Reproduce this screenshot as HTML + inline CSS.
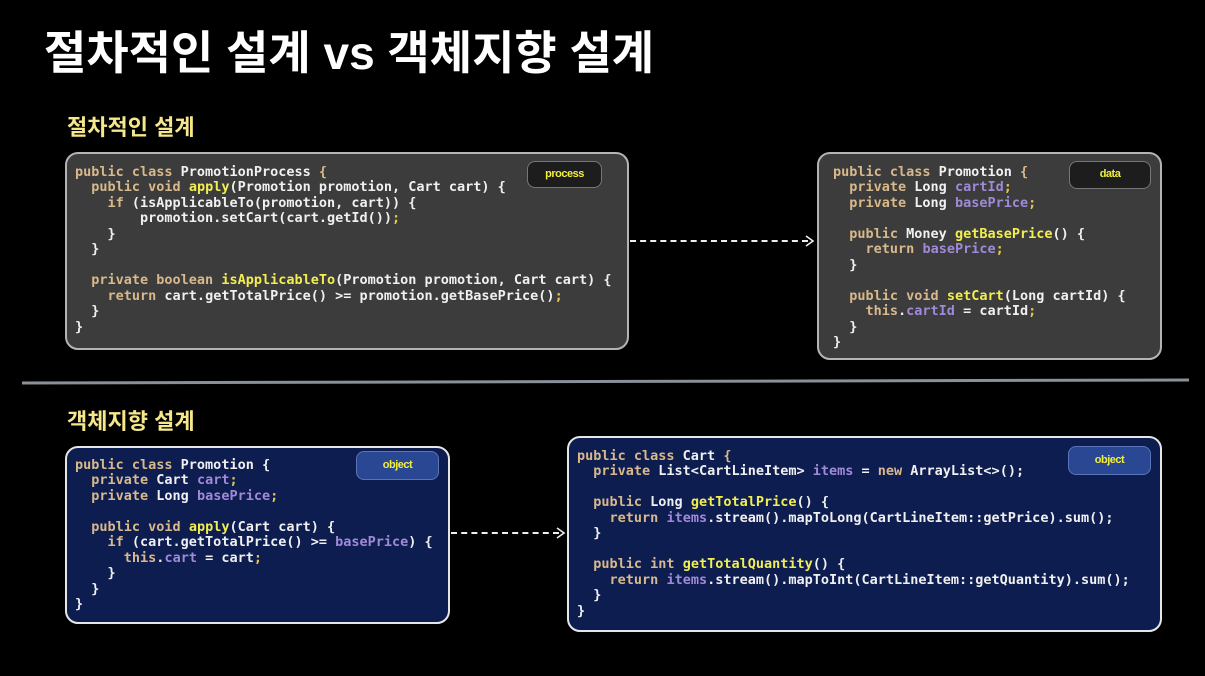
<!DOCTYPE html>
<html><head><meta charset="utf-8"><style>
body{margin:0;width:1205px;height:676px;background:#000;position:relative;overflow:hidden;font-family:"Liberation Sans","Noto Sans CJK KR",sans-serif}
.t{position:absolute;left:44px;top:17px;font-size:46px;font-weight:bold;color:#fff;letter-spacing:0px;white-space:nowrap}
.s{position:absolute;font-size:22px;font-weight:bold;color:#f5e78a;white-space:nowrap}
.box{position:absolute;box-sizing:border-box;border-radius:13px}
.g{background:#3c3c3c;border:2px solid #b4b4b4}
.n{background:#0e1d50;border:2px solid #e6e6e6}
pre{position:absolute;margin:0;font-family:"DejaVu Sans Mono",monospace;font-weight:bold;font-size:13.5px;line-height:15.45px;color:#f0f0f0}
.k{color:#d9b98c}.m{color:#f2ee52}.f{color:#a08ad8}.y{color:#e9c54c}
.b{position:absolute;box-sizing:border-box;border-radius:8px;font-size:11px;font-weight:bold;color:#f2ee40;text-align:center;letter-spacing:-0.5px}
.bg{background:#1d1d1d;border:1.5px solid #777}
.bn{background:#2a4794;border:1.5px solid #5a74b8}
.dash{position:absolute;height:0;border-top:2px dashed #eee}
</style></head><body>
<div class="t">절차적인 설계 vs 객체지향 설계</div>
<div class="s" style="left:67px;top:110px">절차적인 설계</div>
<div class="s" style="left:67px;top:404px">객체지향 설계</div>

<div class="box g" style="left:65px;top:152px;width:564px;height:198px"></div>
<div class="b bg" style="left:527px;top:161px;width:75px;height:27px;line-height:24px">process</div>
<pre style="left:75px;top:165px"><span class="k">public class</span> PromotionProcess <span class="k">{</span>
  <span class="k">public void</span> <span class="m">apply</span>(Promotion promotion, Cart cart) {
    <span class="k">if</span> (isApplicableTo(promotion, cart)) {
        promotion.setCart(cart.getId())<span class="y">;</span>
    }
  }

  <span class="k">private boolean</span> <span class="m">isApplicableTo</span>(Promotion promotion, Cart cart) {
    <span class="k">return</span> cart.getTotalPrice() &gt;= promotion.getBasePrice()<span class="y">;</span>
  }
}</pre>

<div class="box g" style="left:817px;top:152px;width:345px;height:208px"></div>
<div class="b bg" style="left:1069px;top:161px;width:82px;height:28px;line-height:25px">data</div>
<pre style="left:833px;top:165px"><span class="k">public class</span> Promotion <span class="k">{</span>
  <span class="k">private</span> Long <span class="f">cartId</span><span class="y">;</span>
  <span class="k">private</span> Long <span class="f">basePrice</span><span class="y">;</span>

  <span class="k">public</span> Money <span class="m">getBasePrice</span>() {
    <span class="k">return</span> <span class="f">basePrice</span><span class="y">;</span>
  }

  <span class="k">public void</span> <span class="m">setCart</span>(Long cartId) {
    <span class="k">this</span>.<span class="f">cartId</span> = cartId<span class="y">;</span>
  }
}</pre>

<div class="dash" style="left:630px;top:240px;width:178px"></div>
<svg style="position:absolute;left:804px;top:235px" width="12" height="12"><path d="M2 1 L9 6 L2 11" fill="none" stroke="#eee" stroke-width="1.6"/></svg>

<div style="position:absolute;left:22px;top:380px;width:1167px;height:3px;background:#8a9098;transform:rotate(-0.15deg)"></div>

<div class="box n" style="left:65px;top:446px;width:385px;height:178px"></div>
<div class="b bn" style="left:356px;top:451px;width:83px;height:29px;line-height:26px">object</div>
<pre style="left:75px;top:458px"><span class="k">public class</span> Promotion {
  <span class="k">private</span> Cart <span class="f">cart</span><span class="y">;</span>
  <span class="k">private</span> Long <span class="f">basePrice</span><span class="y">;</span>

  <span class="k">public void</span> <span class="m">apply</span>(Cart cart) {
    <span class="k">if</span> (cart.getTotalPrice() &gt;= <span class="f">basePrice</span>) {
      <span class="k">this</span>.<span class="f">cart</span> = cart<span class="y">;</span>
    }
  }
}</pre>

<div class="dash" style="left:451px;top:532px;width:108px"></div>
<svg style="position:absolute;left:555px;top:527px" width="12" height="12"><path d="M2 1 L9 6 L2 11" fill="none" stroke="#eee" stroke-width="1.6"/></svg>

<div class="box n" style="left:567px;top:436px;width:595px;height:196px"></div>
<div class="b bn" style="left:1068px;top:446px;width:83px;height:29px;line-height:26px">object</div>
<pre style="left:577px;top:449px"><span class="k">public class</span> Cart <span class="k">{</span>
  <span class="k">private</span> List&lt;CartLineItem&gt; <span class="f">items</span> = <span class="k">new</span> ArrayList&lt;&gt;();

  <span class="k">public</span> Long <span class="m">getTotalPrice</span>() {
    <span class="k">return</span> <span class="f">items</span>.stream().mapToLong(CartLineItem::getPrice).sum();
  }

  <span class="k">public int</span> <span class="m">getTotalQuantity</span>() {
    <span class="k">return</span> <span class="f">items</span>.stream().mapToInt(CartLineItem::getQuantity).sum();
  }
}</pre>
</body></html>
